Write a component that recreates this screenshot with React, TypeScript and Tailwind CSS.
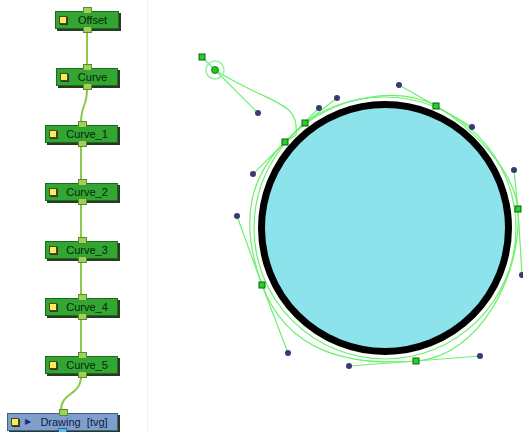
import React from 'react'

type NodeProps = {
  label: string
  top: number
  left: number
  width: number
  blue?: boolean
}

function GraphNode({ label, top, left, width, blue }: NodeProps) {
  const port = 'bg-[#9bd35a] border-[#5b8a2a]'
  return (
    <div className="absolute" style={{ top, left, width }}>
      <div
        className={`relative flex h-[18px] items-center border shadow-[2px_2px_0_#2a3a22] ${
          blue ? 'border-[#40608a] bg-[#7e9fcb]' : 'border-[#1c6a1c] bg-[#32a532]'
        }`}
      >
        <span className="ml-[3px] h-[8px] w-[8px] shrink-0 border border-[#4a4a18] bg-[#f6ef5a] shadow-[1px_1px_0_#333]" />
        {blue && <span className="ml-[6px] text-[8px] leading-none text-[#1e2e70]">▶</span>}
        <span
          className={`flex-1 whitespace-pre text-center text-[11px] leading-none ${
            blue ? 'text-[#101a44]' : 'text-[#062806]'
          }`}
        >
          {label}
        </span>
        <span
          className={`absolute -top-[5px] h-[7px] w-[9px] border ${port}`}
          style={{ left: 'calc(50% - 4px)' }}
        />
        <span
          className={`absolute -bottom-[5px] h-[7px] w-[9px] border ${
            blue ? 'border-[#2a6a9a] bg-[#5cc0ee]' : port
          }`}
          style={{ left: blue ? 'calc(50% - 5px)' : 'calc(50% - 4px)' }}
        />
      </div>
    </div>
  )
}

const nodes: NodeProps[] = [
  { label: 'Offset', top: 11, left: 55, width: 64 },
  { label: 'Curve', top: 68, left: 56, width: 62 },
  { label: 'Curve_1', top: 125, left: 45, width: 73 },
  { label: 'Curve_2', top: 183, left: 45, width: 73 },
  { label: 'Curve_3', top: 241, left: 45, width: 73 },
  { label: 'Curve_4', top: 298, left: 45, width: 73 },
  { label: 'Curve_5', top: 356, left: 45, width: 73 },
  { label: 'Drawing  [tvg]', top: 413, left: 7, width: 111, blue: true },
]

// point x,y then the two handle ends
const handles: [number, number, number, number, number, number][] = [
  [436, 106, 399, 85, 472, 127],
  [518, 209, 514, 170, 522, 275],
  [262, 285, 237, 216, 288, 353],
  [416, 361, 349, 366, 480, 356],
  [285, 142, 253, 174, 319, 108],
  [305, 123, 337, 98, 305, 123],
]

const points: [number, number][] = [
  [202, 57],
  [305, 123],
  [285, 142],
  [436, 106],
  [518, 209],
  [262, 285],
  [416, 361],
]

function NodeView() {
  return (
    <div className="relative h-full w-[148px] shrink-0 border-r border-[#efefef] bg-white">
      <svg className="absolute inset-0" width="148" height="432">
        <g stroke="#8cc84a" strokeWidth="2" fill="none">
          <path d="M87 31 L87 66" />
          <path d="M87 89 C87 108 81 104 81 123" />
          <path d="M81 146 L81 355" />
          <path d="M81 376 C81 396 61 392 61 410" />
        </g>
      </svg>
      {nodes.map((n) => (
        <GraphNode key={n.label} {...n} />
      ))}
    </div>
  )
}

function CanvasView() {
  return (
    <div className="relative h-full flex-1 bg-white">
      <svg className="absolute inset-0" width="375" height="432" viewBox="148 0 375 432">
        <circle cx="385" cy="228" r="123.5" fill="#8de3eb" stroke="#000" strokeWidth="7" />
        <g stroke="#6cf06c" strokeWidth="1.2" fill="none">
          <circle cx="385" cy="228" r="131" />
          <path d="M305 123 C337 98 399 85 436 106 C472 127 514 170 518 209 C522 275 480 356 416 361 C349 366 288 353 262 285 C237 216 253 174 285 142 Z" />
          <path d="M215 70 C270 105 300 100 296 135 L285 142" />
          <path d="M202 57 L215 70 L258 113" />
          {handles.map(([x, y, ax, ay, bx, by], i) => (
            <path key={i} d={`M${ax} ${ay} L${x} ${y} L${bx} ${by}`} />
          ))}
          <circle cx="215" cy="70" r="9" strokeWidth="1.5" stroke="#9cf09c" />
        </g>
        <g fill="#3a3a72">
          {handles.map(([x, y, ax, ay, bx, by], i) => (
            <g key={i}>
              <circle cx={ax} cy={ay} r="3" />
              {(bx !== x || by !== y) && <circle cx={bx} cy={by} r="3" />}
            </g>
          ))}
          <circle cx="258" cy="113" r="3" />
        </g>
        <circle cx="215" cy="70" r="3.5" fill="#1ec81e" stroke="#126012" strokeWidth="0.8" />
        {points.map(([x, y], i) => (
          <rect
            key={i}
            x={x - 3}
            y={y - 3}
            width="6"
            height="6"
            fill="#22d422"
            stroke="#165a16"
            strokeWidth="1"
          />
        ))}
      </svg>
    </div>
  )
}

export default function App() {
  return (
    <div className="flex h-[432px] w-[523px] overflow-hidden bg-white font-['Liberation_Sans',Arial,sans-serif]">
      <NodeView />
      <CanvasView />
    </div>
  )
}
